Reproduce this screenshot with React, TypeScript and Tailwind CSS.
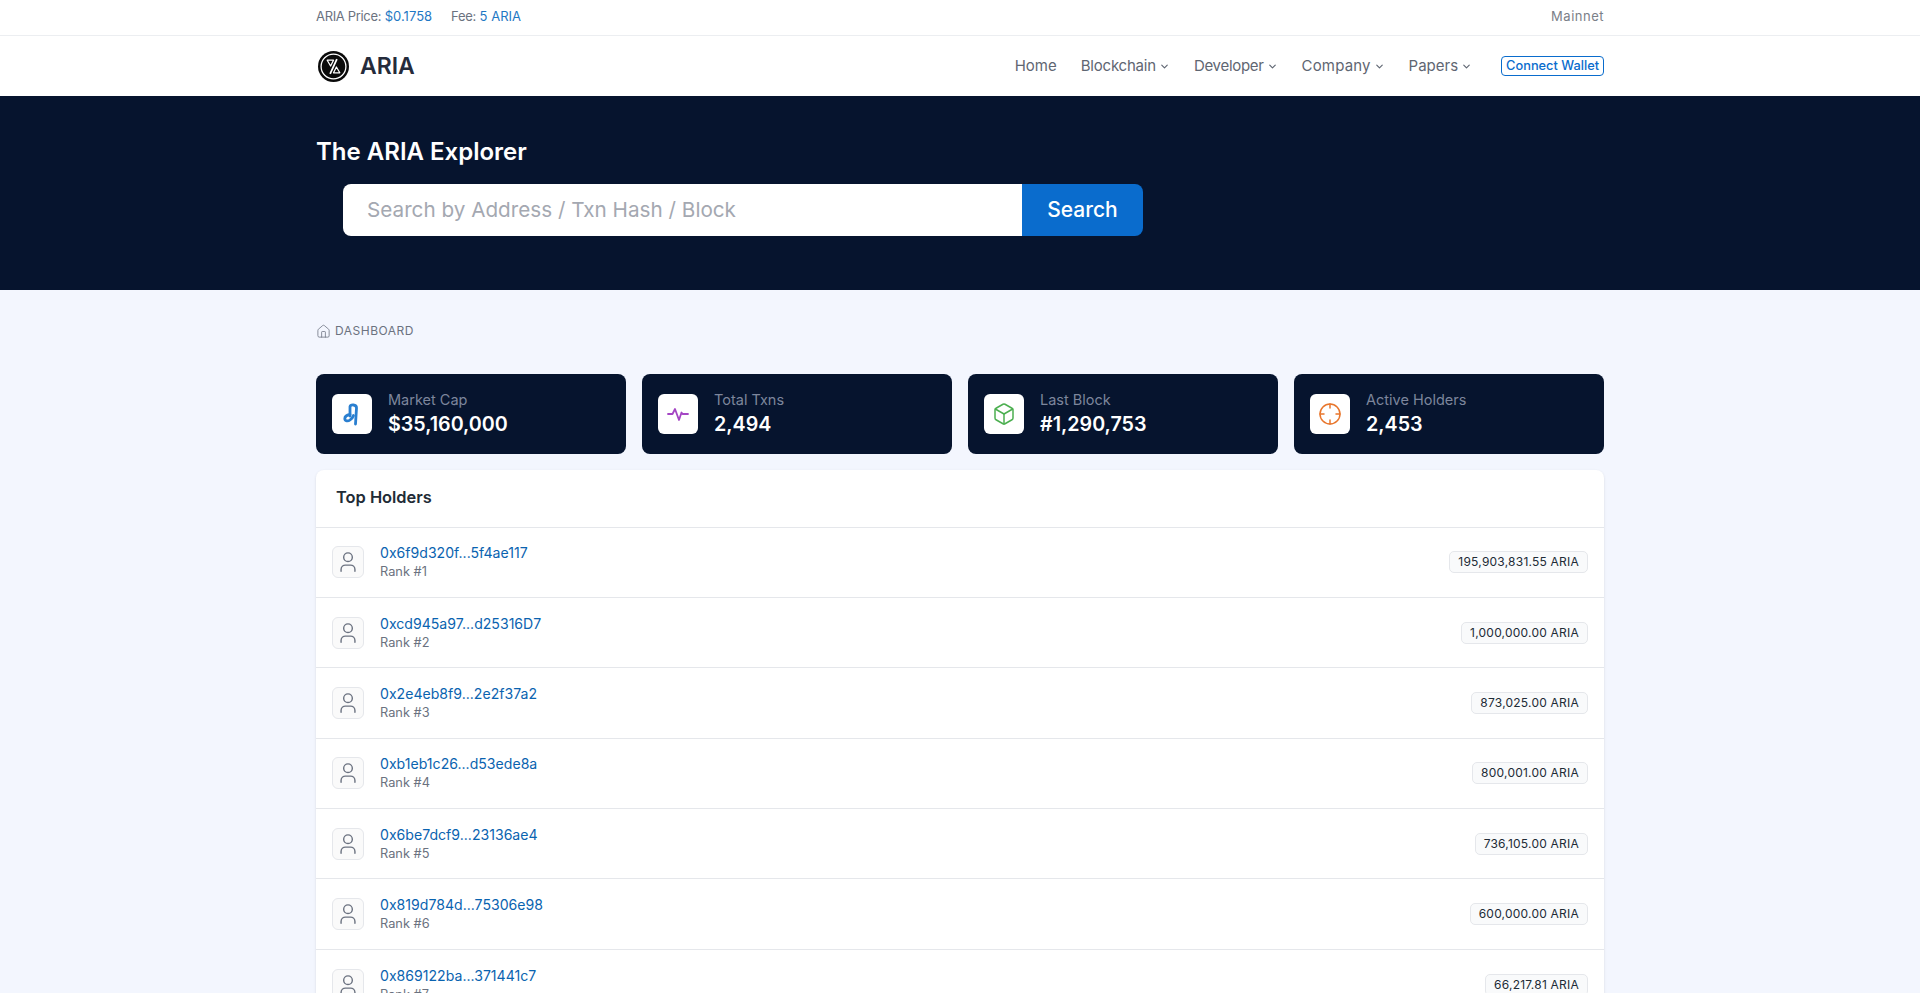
import { Box, ChevronDown, Crosshair, House } from 'lucide-react';

const font = { fontFamily: 'Inter, "Noto Sans", sans-serif' };

const holders = [
  { address: '0x6f9d320f...5f4ae117', rank: 1, balance: '195,903,831.55 ARIA' },
  { address: '0xcd945a97...d25316D7', rank: 2, balance: '1,000,000.00 ARIA' },
  { address: '0x2e4eb8f9...2e2f37a2', rank: 3, balance: '873,025.00 ARIA' },
  { address: '0xb1eb1c26...d53ede8a', rank: 4, balance: '800,001.00 ARIA' },
  { address: '0x6be7dcf9...23136ae4', rank: 5, balance: '736,105.00 ARIA' },
  { address: '0x819d784d...75306e98', rank: 6, balance: '600,000.00 ARIA' },
  { address: '0x869122ba...371441c7', rank: 7, balance: '66,217.81 ARIA' },
];

const navItems = [
  { label: 'Blockchain', className: 'mr-[24px] tracking-[-0.2px]' },
  { label: 'Developer', className: 'mr-[24px] tracking-[-0.3px]' },
  { label: 'Company', className: 'mr-[24px] tracking-[0.15px]' },
  { label: 'Papers', className: 'mr-[29px]' },
];

const Logo = () => (
  <svg viewBox="0 0 32 32" className="h-[31px] w-[31px]">
    <circle cx="16" cy="16" r="16" fill="#0a0a0a" />
    <circle cx="16" cy="16" r="12.8" fill="none" stroke="#fff" strokeWidth="1.3" />
    <path d="M9.5 9.5h6.5l-3 6z" fill="none" stroke="#fff" strokeWidth="1.3" strokeLinejoin="round" />
    <path d="M19.5 8.5L12.5 23.5" fill="none" stroke="#fff" strokeWidth="1.8" />
    <path d="M22.5 22.5h-6.5l3-6z" fill="none" stroke="#fff" strokeWidth="1.3" strokeLinejoin="round" />
  </svg>
);

const MarketIcon = () => (
  <svg viewBox="0 0 24 24" className="h-6 w-6" fill="none" stroke="#2a7fd0" strokeWidth="2.8" strokeLinecap="round" strokeLinejoin="round">
    <path d="M10 14V4.5C10.5 2.5 16.5 2 16.5 6L15.5 22" />
    <path d="M10 12.5C7 13 4.8 14.5 4.8 16.8 4.8 19.2 8 19.5 10 18 12 16.5 13 15 13.5 13.5" />
  </svg>
);

const PulseIcon = () => (
  <svg viewBox="0 0 24 24" className="h-6 w-6" fill="none" stroke="#a445c4" strokeWidth="1.8" strokeLinejoin="round" strokeLinecap="round">
    <path d="M2 12h4.5l2.5-5 4 11 2.5-7.5 1 1.5H22" />
  </svg>
);

const UserIcon = () => (
  <svg viewBox="0 0 24 24" className="h-[26px] w-[26px]" fill="none" stroke="#6b7280" strokeWidth="1.3" strokeLinecap="round">
    <circle cx="12" cy="7.6" r="4" />
    <path d="M5.6 20.5v-1.6c0-2.4 2-4 4-4h4.8c2 0 4 1.6 4 4v1.6" />
  </svg>
);

const stats = [
  { label: 'Market Cap', value: '$35,160,000', icon: <MarketIcon /> },
  { label: 'Total Txns', value: '2,494', icon: <PulseIcon /> },
  { label: 'Last Block', value: '#1,290,753', icon: <Box className="h-6 w-6 text-[#4caf50]" strokeWidth={1.5} /> },
  { label: 'Active Holders', value: '2,453', icon: <Crosshair className="h-6 w-6 text-[#e8762c]" strokeWidth={1.5} /> },
];

export default function App() {
  return (
    <div style={font} className="h-screen overflow-hidden bg-[#f3f6fe] text-[#212b36]">
      <div className="h-[36px] border-b border-[#eceef1] bg-white">
        <div className="mx-auto flex h-full w-[1288px] items-center justify-between pb-[1px] text-[13px] text-[#6b7280]">
          <div className="flex gap-[19px]">
            <span>
              <span className="tracking-[-0.33px]">ARIA Price:</span> <span className="text-[#1f78c4]">$0.1758</span>
            </span>
            <span>
              <span className="tracking-[-0.3px]">Fee:</span> <span className="text-[#1f78c4]">5 ARIA</span>
            </span>
          </div>
          <span className="tracking-[0.5px] text-[#7b8088]">Mainnet</span>
        </div>
      </div>

      <header className="h-[60px] bg-white">
        <div className="mx-auto flex h-full w-[1288px] items-center justify-between">
          <div className="flex items-center gap-[11px] pl-[2px]">
            <Logo />
            <span className="text-[23px] font-semibold text-[#252b3b]">ARIA</span>
          </div>
          <nav className="flex items-center text-[15px] text-[#5f6672]">
            <span className="mr-[24px]">Home</span>
            {navItems.map((item) => (
              <span key={item.label} className={`flex items-center gap-[3px] ${item.className}`}>
                {item.label}
                <ChevronDown className="h-[11px] w-[11px]" strokeWidth={2.5} />
              </span>
            ))}
            <button className="flex h-[20px] items-center rounded-[4px] border border-[#0a6ccd] px-[4px] text-[12.8px] font-medium text-[#0a6ccd]">
              Connect Wallet
            </button>
          </nav>
        </div>
      </header>

      <section className="h-[194px] bg-[#06142e] pt-[38px]">
        <div className="mx-auto w-[1288px]">
          <h1 className="text-[24px] leading-[36px] font-semibold text-white">The ARIA Explorer</h1>
          <div className="mt-[14px] ml-[27px] flex h-[52px] w-[800px]">
            <div className="flex flex-1 items-center rounded-l-[8px] bg-white px-[24px] text-[20.7px] text-[#a4a8b1]">
              Search by Address / Txn Hash / Block
            </div>
            <button className="w-[121px] rounded-r-[8px] bg-[#0a6ccd] text-[21px] font-medium text-white">Search</button>
          </div>
        </div>
      </section>

      <main className="mx-auto w-[1288px]">
        <div className="flex h-[84px] items-center gap-[4px] pb-[2px] text-[12px] tracking-[0.5px] text-[#6b7280]">
          <House className="h-[15px] w-[15px]" strokeWidth={1.25} />
          DASHBOARD
        </div>

        <div className="grid grid-cols-4 gap-[16px]">
          {stats.map((stat) => (
            <div key={stat.label} className="flex h-[80px] items-center gap-[16px] rounded-[8px] bg-[#06142e] px-[16px]">
              <div className="flex h-[40px] w-[40px] items-center justify-center rounded-[6px] bg-white">{stat.icon}</div>
              <div className="pb-[2px]">
                <div className="text-[14.5px] leading-[22px] text-[#7d869c]">{stat.label}</div>
                <div className="text-[19.7px] leading-[26px] font-semibold text-white">{stat.value}</div>
              </div>
            </div>
          ))}
        </div>

        <div className="mt-[16px] rounded-[8px] bg-white shadow-sm">
          <div className="flex h-[57.5px] items-center border-b border-[#e5e7eb] px-[20px] pb-[2px] text-[16.4px] font-semibold text-[#212b36]">
            Top Holders
          </div>
          {holders.map((holder) => (
            <div key={holder.rank} className="flex h-[70.4px] items-center justify-between border-b border-[#e5e7eb] px-[16px]">
              <div className="flex items-center gap-[16px]">
                <div className="flex h-[32px] w-[32px] items-center justify-center rounded-[6px] border border-[#e5e7eb] bg-[#fafafa]">
                  <UserIcon />
                </div>
                <div>
                  <div className="text-[14.1px] leading-[20px] text-[#0a63b0]">{holder.address}</div>
                  <div className="text-[12.8px] leading-[18px] text-[#6b7280]">Rank #{holder.rank}</div>
                </div>
              </div>
              <span className="flex h-[22px] items-center rounded-[5px] border border-[#e5e7eb] bg-[#f9fafb] px-[8px] text-[12px] tracking-[0.22px] text-[#212b36]">
                {holder.balance}
              </span>
            </div>
          ))}
        </div>
      </main>
    </div>
  );
}
